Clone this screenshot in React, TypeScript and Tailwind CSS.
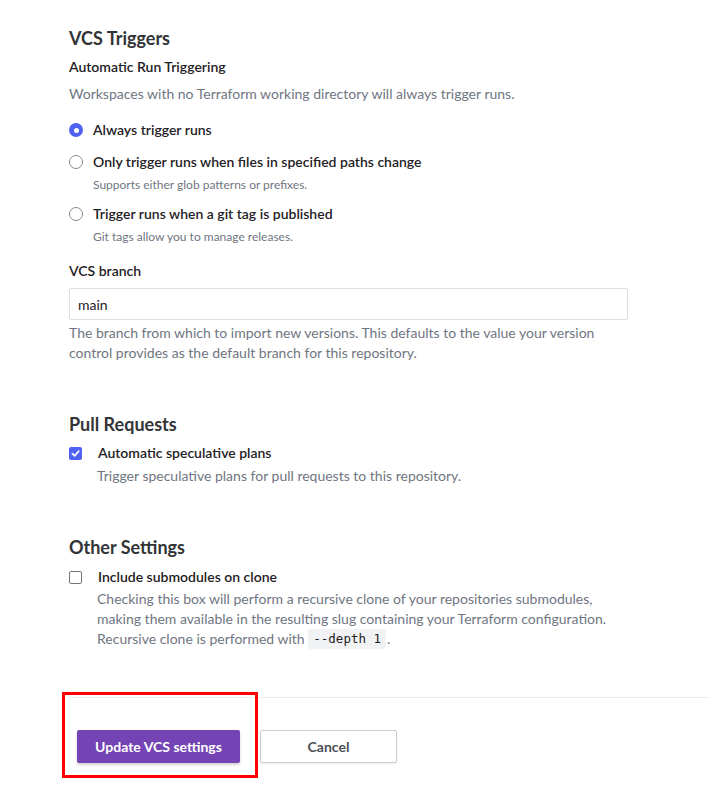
import React from 'react';

function Radio({ checked }: { checked?: boolean }) {
    if (checked) {
        return (
            <span className="flex h-[14px] w-[14px] shrink-0 items-center justify-center rounded-full bg-[#4f62f2]">
                <span className="h-[5px] w-[5px] rounded-full bg-white" />
            </span>
        );
    }
    return <span className="h-[14px] w-[14px] shrink-0 rounded-full border border-[#8a8a8a] bg-white" />;
}

function Checkbox({ checked }: { checked?: boolean }) {
    if (checked) {
        return (
            <span className="flex h-[13px] w-[13px] shrink-0 items-center justify-center rounded-[2px] bg-[#4f62f2]">
                <svg width="9" height="9" viewBox="0 0 10 10" fill="none">
                    <path d="M1.5 5.2 L4 7.6 L8.6 2.4" stroke="white" strokeWidth="1.8" strokeLinecap="round" strokeLinejoin="round" />
                </svg>
            </span>
        );
    }
    return <span className="h-[13px] w-[13px] shrink-0 rounded-[2px] border border-[#767676] bg-white" />;
}

function RadioOption({ label, hint, checked }: { label: string; hint?: string; checked?: boolean }) {
    return (
        <div>
            <label className="flex items-center gap-[10px] text-[14px] leading-[20px] font-semibold text-[#1f2124]">
                <Radio checked={checked} />
                <span>{label}</span>
            </label>
            {hint && <p className="mt-[5px] pl-[24px] text-[12px] leading-[16px] text-[#6f7682]">{hint}</p>}
        </div>
    );
}

export default function App() {
    return (
        <main className="min-h-[801px] bg-white pt-[24px] pl-[69px] font-['Lato','Noto_Sans',sans-serif] text-[14px]">
            <div className="pr-[82px]">
                <section>
                    <h2 className="text-[18px] leading-[28px] font-bold text-[#323436]">VCS Triggers</h2>
                    <h3 className="mt-[5px] text-[14px] leading-[20px] font-semibold text-[#1f2124]">Automatic Run Triggering</h3>
                    <p className="mt-[7px] leading-[20px] text-[#6f7682]">
                        Workspaces with no Terraform working directory will always trigger runs.
                    </p>
                    <div className="mt-[16px]">
                        <RadioOption label="Always trigger runs" checked />
                    </div>
                    <div className="mt-[12px]">
                        <RadioOption
                            label="Only trigger runs when files in specified paths change"
                            hint="Supports either glob patterns or prefixes."
                        />
                    </div>
                    <div className="mt-[11px]">
                        <RadioOption label="Trigger runs when a git tag is published" hint="Git tags allow you to manage releases." />
                    </div>

                    <label className="mt-[16px] block leading-[20px] font-semibold text-[#1f2124]">VCS branch</label>
                    <input
                        defaultValue="main"
                        className="mt-[7px] h-[32px] w-full rounded-[2px] border border-[#dcdfe3] px-[8px] text-[14px] text-[#1f2124] outline-none"
                    />
                    <p className="mt-[3px] leading-[20px] text-[#6f7682]">
                        The branch from which to import new versions. This defaults to the value your version control
                        provides as the default branch for this repository.
                    </p>
                </section>

                <section className="mt-[47px]">
                    <h2 className="text-[18px] leading-[28px] font-bold text-[#323436]">Pull Requests</h2>
                    <label className="mt-[5px] flex items-center gap-[16px] leading-[20px] font-semibold text-[#1f2124]">
                        <Checkbox checked />
                        <span>Automatic speculative plans</span>
                    </label>
                    <p className="mt-[3px] pl-[28px] leading-[20px] text-[#6f7682]">
                        Trigger speculative plans for pull requests to this repository.
                    </p>
                </section>

                <section className="mt-[47px]">
                    <h2 className="text-[18px] leading-[28px] font-bold text-[#323436]">Other Settings</h2>
                    <label className="mt-[6px] flex items-center gap-[16px] leading-[20px] font-semibold text-[#1f2124]">
                        <Checkbox />
                        <span>Include submodules on clone</span>
                    </label>
                    <p className="mt-[2px] pl-[28px] leading-[20px] text-[#6f7682]">
                        Checking this box will perform a recursive clone of your repositories submodules, making them
                        available in the resulting slug containing your Terraform configuration. Recursive clone is
                        performed with{' '}
                        <code className="inline-block rounded-[2px] bg-[#f1f2f3] px-[5px] align-top font-['DejaVu_Sans_Mono',monospace] text-[12.5px] leading-[20px] text-[#1f2124]">
                            --depth 1
                        </code>
                        <span className="ml-[1px]">.</span>
                    </p>
                </section>
            </div>

            <div className="relative mt-[48px] border-t border-[#ebeef0] pt-[32px] pl-[8px]">
                <div className="flex gap-[20px]">
                    <button className="h-[33px] w-[163px] rounded-[2px] bg-[#7444b4] text-[14px] font-bold text-white shadow-[0_2px_3px_rgba(0,0,0,0.18)]">
                        Update VCS settings
                    </button>
                    <button className="h-[33px] w-[137px] rounded-[2px] border border-[#c9ccd1] bg-white text-[14px] font-bold text-[#4b4f55] shadow-[0_1px_2px_rgba(0,0,0,0.08)]">
                        Cancel
                    </button>
                </div>
                <div className="pointer-events-none absolute top-[-6px] left-[-7px] h-[86px] w-[196px] border-[3px] border-[#ff0000]" />
            </div>
        </main>
    );
}
